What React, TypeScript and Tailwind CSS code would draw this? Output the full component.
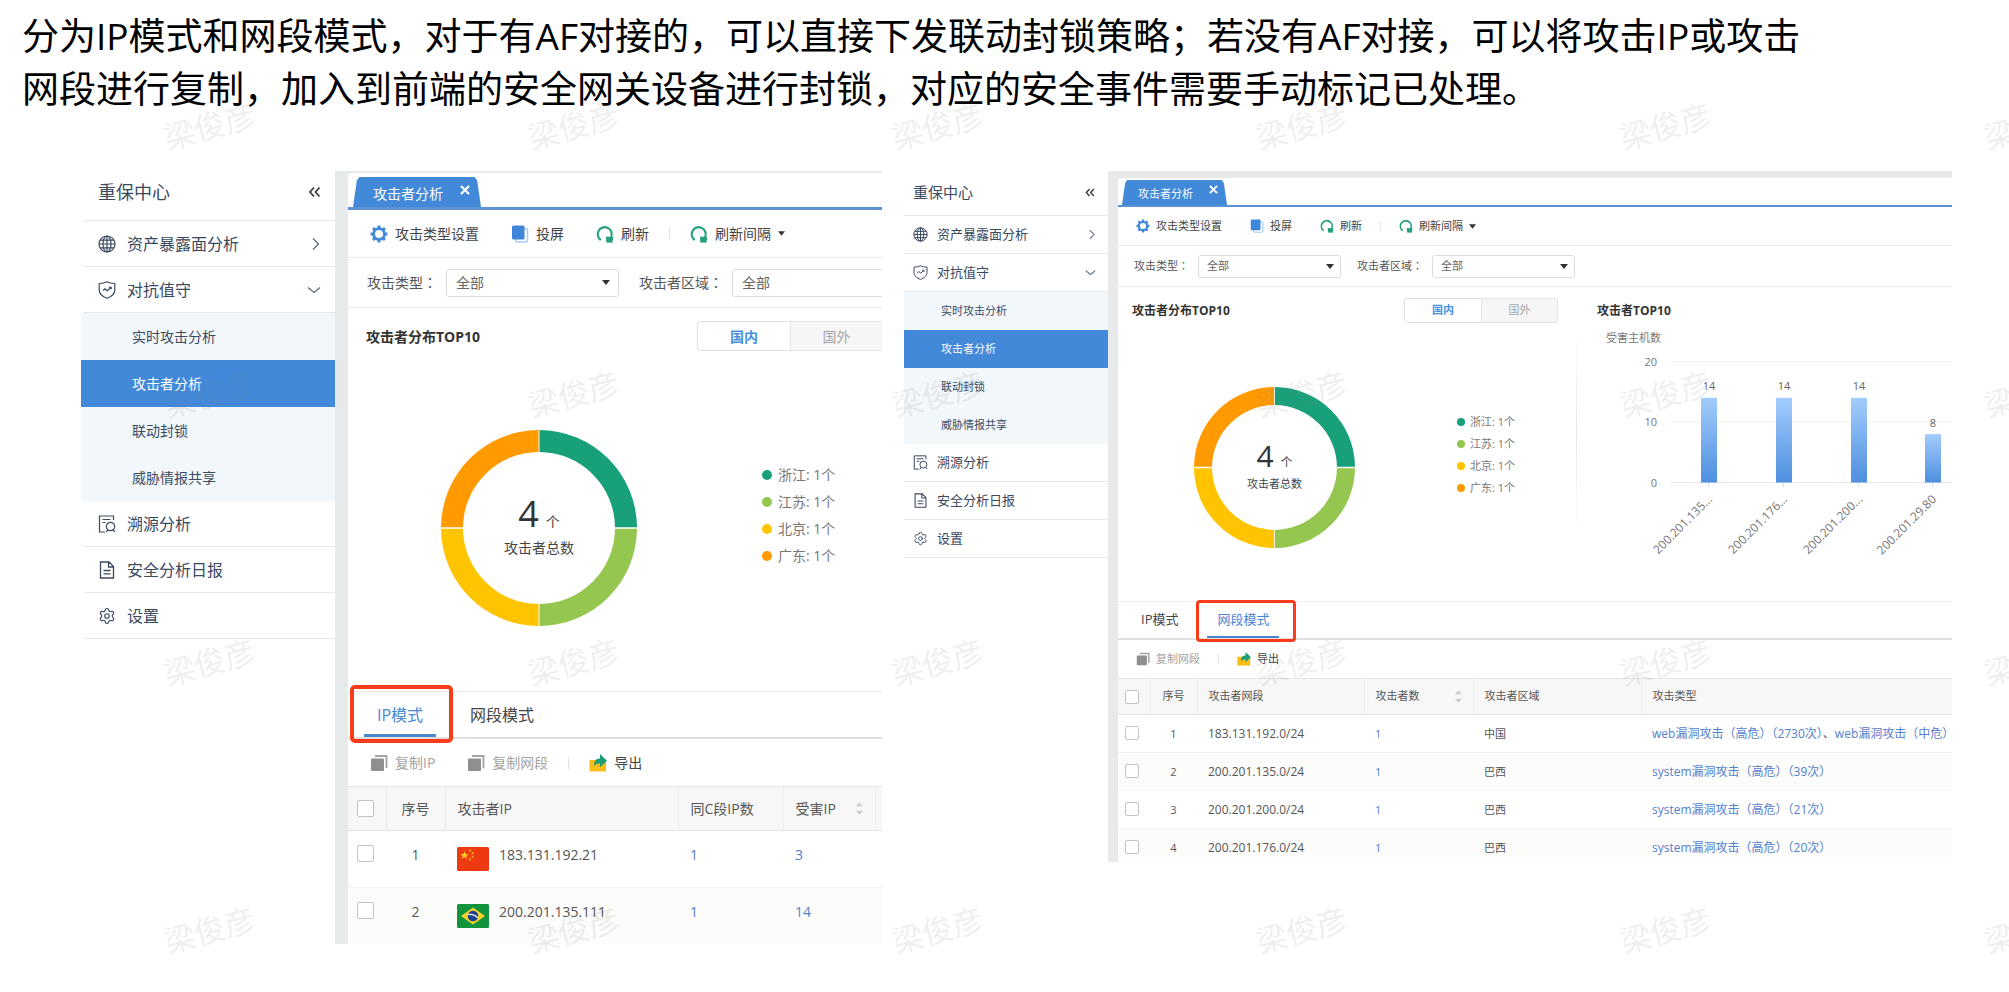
import type { ReactNode } from "react";
import { Settings } from "lucide-react";

/* ---------- size variants ---------- */

const large = {
  sideTitle: "flex h-[49px] items-center justify-between pl-[14px] pr-[14px] pb-[7px] text-[18px]",
  sideTitleLine: "ml-[3px] border-b border-[#e4e6e8]",
  side: "w-[254px] shrink-0",
  sideItem: "ml-[3px] flex h-[46px] items-center gap-[11px] border-b border-[#e6e8ea] pl-[14px] pr-[14px] text-[16px]",
  sideSub: "flex h-[47px] w-full items-center pl-[51px] text-[14px]",
  sideIcon: "size-[18px] shrink-0",
  chevron: "size-[14px]",
  frame: "min-w-0 flex-1 overflow-hidden bg-[#e7eaea] pl-[13px] pt-[2px]",
  tabBar: "flex h-[37px] items-end border-b-[3px] border-[#5b92d2] pl-[5px]",
  tab: "flex h-[30px] w-[128px] items-start pl-[20px] text-[14px] leading-[34px]",
  tabClose: "ml-auto mr-[11px] mt-[8px]",
  close: "size-[10px]",
  toolbar: "flex h-[47px] items-center pl-[6px]",
  tool: "flex items-center gap-[7px] px-4 text-[14px] whitespace-nowrap",
  toolIcon: "size-[18px] shrink-0",
  sep: "mx-1 h-[12px] w-px shrink-0 bg-[#e2e2e2]",
  filters: "flex h-[51px] items-center gap-5 border-y border-[#ebebeb] pl-[19px]",
  filter: "flex shrink-0 items-center gap-[9px] text-[14px]",
  select: "h-[28px] w-[173px] pl-[9px] text-[14px]",
  caret: "right-[9px]",
  head: "flex items-center justify-between pl-[18px] pt-[13px]",
  title: "text-[14px]",
  toggle: "h-[30px] rounded-l-[3px] border-y border-l",
  toggleBtn: "w-[92px] text-[14px]",
  donutRow: "flex items-start pb-[65px] pl-[93px] pt-[79px]",
  donut: "size-[196px]",
  donutBox: "relative shrink-0",
  big: "text-[36px] leading-[40px]",
  unit: "text-[14px]",
  total: "text-[14px] leading-[20px]",
  legend: "ml-[125px] mt-[31px] shrink-0 text-[14px] leading-[27px]",
  dot: "size-[10px]",
  legendItem: "flex items-center gap-[6px]",
  modes: "flex h-[48px] gap-[21px] border-t border-b-2 border-t-[#ececec] border-b-[#e0e0e0] pl-4",
  mode: "px-[13px] text-[16px]",
  ring: "-left-[14px] -right-[17px] -top-[7px] -bottom-[6px] border-4 rounded-[5px]",
  bar: "h-[3px]",
  th: "h-[44px] px-3 text-[14px]",
  td: "px-3 pt-[14px] text-[14px] leading-[20px]",
  row: "h-[57px] last:h-[56px]",
  checkCell: "pl-[9px]",
  check: "size-[17px]",
};

const small: typeof large = {
  sideTitle: "flex h-[44px] items-center justify-between pl-[9px] pr-[13px] pb-[2px] text-[15px]",
  sideTitleLine: "border-b border-[#e4e6e8]",
  side: "w-[204px] shrink-0",
  sideItem: "flex h-[38px] items-center gap-[9px] border-b border-[#e6e8ea] pl-[9px] pr-[12px] text-[13px]",
  sideSub: "flex h-[38px] w-full items-center pl-[37px] text-[11px]",
  sideIcon: "size-[15px] shrink-0",
  chevron: "size-[11px]",
  frame: "min-w-0 flex-1 overflow-hidden bg-[#e7e9eb] pl-[10px] pt-[7px]",
  tabBar: "flex h-[29px] items-end border-b-2 border-[#5b92d2] pl-[4px]",
  tab: "flex h-[25px] w-[105px] items-start pl-[16px] text-[11px] leading-[28px]",
  tabClose: "ml-auto mr-[9px] mt-[5px]",
  close: "size-[9px]",
  toolbar: "flex h-[38px] items-center pl-[4px]",
  tool: "flex items-center gap-[6px] px-[14px] text-[11px] whitespace-nowrap",
  toolIcon: "size-[14px] shrink-0",
  sep: "mx-1 h-[10px] w-px shrink-0 bg-[#e2e2e2]",
  filters: "flex h-[42px] items-center gap-4 border-y border-[#ebebeb] pl-[16px]",
  filter: "flex shrink-0 items-center gap-[9px] text-[11px]",
  select: "h-[23px] w-[143px] pl-[8px] text-[11px]",
  caret: "right-[7px]",
  head: "flex items-center justify-between pl-[14px] pr-[18px] pt-[11px]",
  title: "text-[12px]",
  toggle: "h-[25px] rounded-[3px] border",
  toggleBtn: "w-[76px] text-[11px]",
  donutRow: "flex items-start pb-[53px] pl-[76px] pt-[64px]",
  donut: "size-[161px]",
  donutBox: "relative shrink-0",
  big: "text-[30px] leading-[32px]",
  unit: "text-[12px]",
  total: "text-[11px] leading-[16px]",
  legend: "ml-[102px] mt-[24px] shrink-0 text-[11px] leading-[22px]",
  dot: "size-[8px]",
  legendItem: "flex items-center gap-[5px]",
  modes: "flex h-[39px] gap-[19px] border-t border-b-2 border-t-[#ececec] border-b-[#e0e0e0] pl-[13px]",
  mode: "px-[10px] text-[13px]",
  ring: "-left-[11px] -right-[17px] -top-[2px] -bottom-[4px] border-[3px] rounded-[4px]",
  bar: "h-[2px]",
  th: "h-[36px] px-[11px] text-[11px]",
  td: "px-[11px] pt-[10px] text-[11px] leading-[18px]",
  row: "h-[38px] last:h-[33px]",
  checkCell: "pl-[7px]",
  check: "size-[14px]",
};

type Size = typeof large;

/* ---------- icons ---------- */

type IconProps = { className?: string };

const GlobeIcon = ({ className }: IconProps) => (
  <svg viewBox="0 0 18 18" className={className} fill="none" stroke="currentColor" strokeWidth="1.2" aria-hidden="true">
    <circle cx="9" cy="9" r="8" />
    <ellipse cx="9" cy="9" rx="4" ry="8" />
    <path d="M9 1v16M1 9h16M2 5.2h14M2 12.8h14" />
  </svg>
);

const ShieldIcon = ({ className }: IconProps) => (
  <svg viewBox="0 0 18 18" className={className} fill="none" stroke="currentColor" strokeWidth="1.2" strokeLinejoin="round" aria-hidden="true">
    <path d="M9 .8 C7 2 4.200 2.500 1.200 2.500 V9 C1.200 13 4.500 15.700 9 17.300 C13.500 15.700 16.800 13 16.800 9 V2.500 C13.800 2.500 11 2 9 .8Z" />
    <path d="M5 9.600l2-1.800 2.300 2L13 6.400M11 6.300h2.200v2" />
  </svg>
);

const TraceIcon = ({ className }: IconProps) => (
  <svg viewBox="0 0 18 18" className={className} fill="none" stroke="currentColor" strokeWidth="1.2" aria-hidden="true">
    <path d="M15.500 5V1H1.500v16h5.500M4.500 4.500h8M4.500 7.500h3" />
    <circle cx="12.500" cy="11.500" r="4.200" />
    <path d="M9.800 14.800l-1.500 2.200M15.300 14.800l1.700 2.200" />
  </svg>
);

const ReportIcon = ({ className }: IconProps) => (
  <svg viewBox="0 0 18 18" className={className} fill="none" stroke="currentColor" strokeWidth="1.300" aria-hidden="true">
    <path d="M2.500 1h8.500l4.500 4.500V17h-13zM10.500 1v5h5M5.500 9.500h7M5.500 12.800h7" />
  </svg>
);

const ChevronIcon = ({ className, down }: IconProps & { down?: boolean }) => (
  <svg viewBox="0 0 14 14" className={className} fill="none" stroke="#5d6b7c" strokeWidth="1.300" aria-hidden="true">
    {down ? <path d="M1 4.500l6 5 6-5" /> : <path d="M6 1.500l5.500 5.500L6 12.500" />}
  </svg>
);

const CollapseIcon = ({ className }: IconProps) => (
  <svg viewBox="0 0 14 14" className={className} fill="none" stroke="#3d3d3d" strokeWidth="1.800" aria-hidden="true">
    <path d="M7 2.500L3 7l4 4.500M12.500 2.500L8.500 7l4 4.500" />
  </svg>
);

const CloseIcon = ({ className }: IconProps) => (
  <svg viewBox="0 0 10 10" className={className} stroke="#fff" strokeWidth="2.200" aria-hidden="true">
    <path d="M1 1l8 8M9 1L1 9" />
  </svg>
);

const GearIcon = ({ className }: IconProps) => (
  <svg viewBox="0 0 18 18" className={className} fill="none" stroke="#4289da" aria-hidden="true">
    <circle cx="9" cy="9" r="5.400" strokeWidth="2.800" />
    <path
      d="M9 .6v3M9 14.400v3M.6 9h3M14.400 9h3M3.060 3.060l2.100 2.100M12.840 12.840l2.100 2.100M3.060 14.940l2.100-2.100M12.840 5.160l2.100-2.100"
      strokeWidth="3"
    />
  </svg>
);

const CastIcon = ({ className }: IconProps) => (
  <svg viewBox="0 0 18 18" className={className} aria-hidden="true">
    <rect x="4.500" y="3.500" width="12" height="13.500" rx="2" fill="#fff" stroke="#a9cbf3" strokeWidth="1.500" />
    <rect x="1" y=".5" width="12.500" height="14" rx="1.500" fill="#3f86db" />
  </svg>
);

const RefreshIcon = ({ className }: IconProps) => (
  <svg viewBox="0 0 18 18" className={className} aria-hidden="true">
    <path d="M4.800 15A7 7 0 1 1 15.500 11L14 14.500" fill="none" stroke="#26a07f" strokeWidth="2.200" />
    <path d="M10 11.500l7.500 .8-1.200 5.500-6-.4z" fill="#26a07f" />
  </svg>
);

const CopyIcon = ({ className }: IconProps) => (
  <svg viewBox="0 0 18 18" className={className} aria-hidden="true">
    <path d="M5 2h11.500v12" fill="none" stroke="#a3a3a3" strokeWidth="1.800" />
    <rect x="1" y="4.500" width="13" height="12.500" rx="1" fill="#8f8f8f" />
  </svg>
);

const ExportIcon = ({ className }: IconProps) => (
  <svg viewBox="0 0 18 18" className={className} aria-hidden="true">
    <path d="M.5 6h16.500V17.500H.5z" fill="#fcbd16" />
    <path d="M5 12C5 7.500 6.500 4.500 11 4.500V0l7 6.800-7 6.400V9.600C8.500 9.600 6.500 10 5 12z" fill="#1e9e78" />
  </svg>
);

const CaretIcon = ({ className }: IconProps) => (
  <svg viewBox="0 0 8 5" className={className} aria-hidden="true">
    <path d="M0 0h8L4 5z" fill="#333" />
  </svg>
);

const SortIcon = () => (
  <svg viewBox="0 0 8 14" className="h-[13px] w-[7px]" fill="#cdcdcd" aria-hidden="true">
    <path d="M4 0l4 4.500H0zM4 14L0 9.500h8z" />
  </svg>
);

const ChinaFlag = () => (
  <svg viewBox="0 0 32 24" className="h-6 w-8 shrink-0" role="img" aria-label="中国">
    <rect width="32" height="24" rx="1.500" fill="#ee3a12" />
    <path d="M7.500 4l1.100 3h3.200L9.200 8.900l1 3.100-2.700-1.900L4.800 12l1-3.100L3.200 7h3.200z" fill="#ffd21f" />
    <g fill="#ffc61a">
      <circle cx="13" cy="3.500" r="1" />
      <circle cx="15.500" cy="6" r="1" />
      <circle cx="15.500" cy="9.500" r="1" />
      <circle cx="13" cy="12.500" r="1" />
    </g>
  </svg>
);

const BrazilFlag = () => (
  <svg viewBox="0 0 32 24" className="h-6 w-8 shrink-0" role="img" aria-label="巴西">
    <rect width="32" height="24" rx="1.500" fill="#12943c" />
    <path d="M16 3.500L28 12 16 20.500 4 12z" fill="#f6d32a" />
    <circle cx="16" cy="12" r="5.300" fill="#1d3f8f" />
    <path d="M11.200 10.500c3.600-.6 7 .6 9.600 3.400" fill="none" stroke="#fff" strokeWidth="1.300" />
  </svg>
);

/* ---------- sidebar ---------- */

const subItems = ["实时攻击分析", "攻击者分析", "联动封锁", "威胁情报共享"];

function Sidebar({ s }: { s: Size }) {
  return (
    <nav className={`${s.side} text-[#3a4a5f]`} aria-label="重保中心">
      <div className={s.sideTitleLine}>
        <div className={s.sideTitle}>
          <span>重保中心</span>
          <button type="button" aria-label="收起">
            <CollapseIcon className={s.chevron} />
          </button>
        </div>
      </div>
      <a href="#assets" className={s.sideItem}>
        <GlobeIcon className={s.sideIcon} />
        <span className="flex-1">资产暴露面分析</span>
        <ChevronIcon className={s.chevron} />
      </a>
      <a href="#guard" className={s.sideItem}>
        <ShieldIcon className={s.sideIcon} />
        <span className="flex-1">对抗值守</span>
        <ChevronIcon className={s.chevron} down />
      </a>
      <div className="bg-[#f2f7fb]">
        {subItems.map((label) => (
          <a
            key={label}
            href="#guard"
            className={`${s.sideSub} ${label === "攻击者分析" ? "bg-[#4289da] text-white" : ""}`}
          >
            {label}
          </a>
        ))}
      </div>
      <a href="#trace" className={s.sideItem}>
        <TraceIcon className={s.sideIcon} />
        溯源分析
      </a>
      <a href="#report" className={s.sideItem}>
        <ReportIcon className={s.sideIcon} />
        安全分析日报
      </a>
      <a href="#settings" className={s.sideItem}>
        <Settings className={s.sideIcon} strokeWidth={1.5} />
        设置
      </a>
    </nav>
  );
}

/* ---------- main area parts ---------- */

function Tool({ s, icon, children, muted }: { s: Size; icon: ReactNode; children: ReactNode; muted?: boolean }) {
  return (
    <button type="button" className={`${s.tool} ${muted ? "text-[#a3a3a3]" : "text-[#444]"}`}>
      {icon}
      {children}
    </button>
  );
}

function Filter({ s, id, label }: { s: Size; id: string; label: string }) {
  return (
    <div className={`${s.filter} text-[#555]`}>
      <label htmlFor={id} className="whitespace-nowrap">
        {label}
        <span className="font-['Noto_Sans_CJK_JP',sans-serif]">：</span>
      </label>
      <div className="relative flex items-center">
        <select id={id} className={`${s.select} appearance-none rounded-[3px] border border-[#dcdcdc] bg-white text-[#666]`}>
          <option>全部</option>
        </select>
        <CaretIcon className={`${s.caret} pointer-events-none absolute h-[5px] w-[8px]`} />
      </div>
    </div>
  );
}

function TopBars({ s, id }: { s: Size; id: string }) {
  return (
    <>
      <div className={s.tabBar}>
        <div
          className={`${s.tab} bg-[#4289da] text-white [clip-path:polygon(3%_12%,5%_0,95%_0,97%_12%,100%_100%,0_100%)]`}
        >
          <button type="button">攻击者分析</button>
          <button type="button" aria-label="关闭" className={s.tabClose}>
            <CloseIcon className={s.close} />
          </button>
        </div>
      </div>
      <div className={s.toolbar}>
        <Tool s={s} icon={<GearIcon className={s.toolIcon} />}>攻击类型设置</Tool>
        <Tool s={s} icon={<CastIcon className={s.toolIcon} />}>投屏</Tool>
        <Tool s={s} icon={<RefreshIcon className={s.toolIcon} />}>刷新</Tool>
        <span className={s.sep} />
        <Tool s={s} icon={<RefreshIcon className={s.toolIcon} />}>
          刷新间隔
          <CaretIcon className="h-[5px] w-[7px]" />
        </Tool>
      </div>
      <div className={s.filters}>
        <Filter s={s} id={`${id}-type`} label="攻击类型" />
        <Filter s={s} id={`${id}-area`} label="攻击者区域" />
      </div>
    </>
  );
}

const regions = [
  { name: "浙江", bg: "bg-[#17a07a]", arc: "M100.500 2A98 98 0 0 1 198 99.200H176A76 76 0 0 0 100.500 24Z", fill: "#17a07a" },
  { name: "江苏", bg: "bg-[#95c750]", arc: "M198 100.800A98 98 0 0 1 100.500 198V176A76 76 0 0 0 176 100.800Z", fill: "#95c750" },
  { name: "北京", bg: "bg-[#ffc400]", arc: "M99.500 198A98 98 0 0 1 2 100.800H24A76 76 0 0 0 99.500 176Z", fill: "#ffc400" },
  { name: "广东", bg: "bg-[#ff9a00]", arc: "M2 99.200A98 98 0 0 1 99.500 2V24A76 76 0 0 0 24 99.200Z", fill: "#ff9a00" },
];

function Distribution({ s }: { s: Size }) {
  return (
    <section className="min-w-0">
      <div className={s.head}>
        <h2 className={`${s.title} font-bold text-[#333]`}>攻击者分布TOP10</h2>
        <div className={`${s.toggle} flex overflow-hidden border-[#e2e2e2]`}>
          <button type="button" className={`${s.toggleBtn} font-bold text-[#4a90e2]`}>国内</button>
          <button type="button" className={`${s.toggleBtn} border-l border-[#e8e8e8] bg-[#f6f6f6] text-[#a6a6a6]`}>
            国外
          </button>
        </div>
      </div>
      <div className={s.donutRow}>
        <div className={s.donutBox}>
          <svg viewBox="2 2 196 196" className={s.donut} aria-hidden="true">
            {regions.map((r) => (
              <path key={r.name} d={r.arc} fill={r.fill} />
            ))}
          </svg>
          <div className="absolute inset-0 flex flex-col items-center justify-center gap-1 pb-1 text-[#444]">
            <div className="flex items-baseline gap-[7px]">
              <span className={`${s.big} text-[#333]`}>4</span>
              <span className={s.unit}>个</span>
            </div>
            <div className={s.total}>攻击者总数</div>
          </div>
        </div>
        <ul className={`${s.legend} text-[#777]`}>
          {regions.map((r) => (
            <li key={r.name} className={s.legendItem}>
              <span className={`${s.dot} ${r.bg} rounded-full`} />
              {r.name}: 1个
            </li>
          ))}
        </ul>
      </div>
    </section>
  );
}

const bars = [
  { label: "200.201.135...", value: 14, x: 124 },
  { label: "200.201.176...", value: 14, x: 199 },
  { label: "200.201.200...", value: 14, x: 274 },
  { label: "200.201.29.80", value: 8, x: 348 },
];

function BarChart() {
  return (
    <svg width="375" height="260" viewBox="0 0 375 260" fontSize="11" fill="#777" role="img" aria-label="受害主机数">
      <defs>
        <linearGradient id="bar-fill" x1="0" y1="0" x2="0" y2="1">
          <stop offset="0" stopColor="#a3ccfd" />
          <stop offset="1" stopColor="#4e8fdf" />
        </linearGradient>
      </defs>
      <text x="29" y="19">受害主机数</text>
      {[20, 10, 0].map((tick) => (
        <g key={tick}>
          <path d={`M94 ${159.5 - tick * 6.05}H375`} stroke={tick ? "#f0f0f0" : "#e4e7ea"} />
          <text x="80" y={163.5 - tick * 6.05} textAnchor="end">{tick}</text>
        </g>
      ))}
      {bars.map((b) => (
        <g key={b.label}>
          <rect x={b.x} y={159.5 - b.value * 6.05} width="16" height={b.value * 6.05} fill="url(#bar-fill)" />
          <path d={`M${b.x + 7.5} 160v4`} stroke="#cfe0f5" />
          <text x={b.x + 8} y={152 - b.value * 6.05} textAnchor="middle" fill="#666">{b.value}</text>
          <text transform={`translate(${b.x + 12} 177) rotate(-45)`} textAnchor="end" fontSize="12">{b.label}</text>
        </g>
      ))}
    </svg>
  );
}

function Modes({ s, labels, active }: { s: Size; labels: string[]; active: string }) {
  return (
    <div className={s.modes} role="tablist">
      {labels.map((label) => {
        const on = label === active;
        return (
          <button
            key={label}
            type="button"
            role="tab"
            aria-selected={on}
            className={`${s.mode} relative ${on ? "text-[#4a86d6]" : "text-[#444]"}`}
          >
            {label}
            {on && <span className={`${s.bar} absolute inset-x-0 bottom-0 bg-[#4a86d0]`} />}
            {on && <span className={`${s.ring} absolute border-[#fa3c1b]`} />}
          </button>
        );
      })}
    </div>
  );
}

function Check({ s, label }: { s: Size; label: string }) {
  return (
    <input
      type="checkbox"
      aria-label={label}
      className={`${s.check} block appearance-none rounded-[2px] border border-[#c4c4c4] bg-white`}
    />
  );
}

const headRow = "border-y border-[#e3e3e3] bg-[#f7f7f7] text-left text-[#555]";
const headCell = "border-r border-[#eeeeee] font-normal";
const bodyRow = "border-b border-[#f3f3f3] align-top text-[#555] even:bg-[#fcfcfb] last:border-b-0";
const link = "text-[#5580cc]";

const attackers = [
  { ip: "183.131.192.21", flag: <ChinaFlag />, peers: 1, victims: 3 },
  { ip: "200.201.135.111", flag: <BrazilFlag />, peers: 1, victims: 14 },
];

function IpTable({ s }: { s: Size }) {
  return (
    <table className="w-full table-fixed border-collapse">
      <colgroup>
        <col className="w-[38px]" />
        <col className="w-[59px]" />
        <col className="w-[233px]" />
        <col className="w-[105px]" />
        <col className="w-[92px]" />
        <col />
      </colgroup>
      <thead>
        <tr className={headRow}>
          <th className={`${headCell} ${s.checkCell}`}><Check s={s} label="全选" /></th>
          <th className={`${s.th} ${headCell} text-center`}>序号</th>
          <th className={`${s.th} ${headCell}`}>攻击者IP</th>
          <th className={`${s.th} ${headCell}`}>同C段IP数</th>
          <th className={`${s.th} ${headCell}`}>
            <div className="flex items-center justify-between">
              受害IP
              <SortIcon />
            </div>
          </th>
          <th />
        </tr>
      </thead>
      <tbody>
        {attackers.map((a, i) => (
          <tr key={a.ip} className={`${bodyRow} ${s.row}`}>
            <td className={`${s.checkCell} pt-[14px]`}><Check s={s} label={a.ip} /></td>
            <td className={`${s.td} text-center`}>{i + 1}</td>
            <td className={s.td}>
              <div className="flex items-start gap-[10px]">
                <span className="pt-[2px]">{a.flag}</span>
                {a.ip}
              </div>
            </td>
            <td className={s.td}><a href="#peers" className={link}>{a.peers}</a></td>
            <td className={s.td}><a href="#victims" className={link}>{a.victims}</a></td>
            <td />
          </tr>
        ))}
      </tbody>
    </table>
  );
}

const segments = [
  { net: "183.131.192.0/24", area: "中国", types: ["web漏洞攻击（高危）（2730次）", "web漏洞攻击（中危）"] },
  { net: "200.201.135.0/24", area: "巴西", types: ["system漏洞攻击（高危）（39次）"] },
  { net: "200.201.200.0/24", area: "巴西", types: ["system漏洞攻击（高危）（21次）"] },
  { net: "200.201.176.0/24", area: "巴西", types: ["system漏洞攻击（高危）（20次）"] },
];

function SegmentTable({ s }: { s: Size }) {
  return (
    <table className="w-full table-fixed border-collapse">
      <colgroup>
        <col className="w-[32px]" />
        <col className="w-[47px]" />
        <col className="w-[167px]" />
        <col className="w-[109px]" />
        <col className="w-[168px]" />
        <col />
      </colgroup>
      <thead>
        <tr className={headRow}>
          <th className={`${headCell} ${s.checkCell}`}><Check s={s} label="全选" /></th>
          <th className={`${s.th} ${headCell} text-center`}>序号</th>
          <th className={`${s.th} ${headCell}`}>攻击者网段</th>
          <th className={`${s.th} ${headCell}`}>
            <div className="flex items-center justify-between">
              攻击者数
              <SortIcon />
            </div>
          </th>
          <th className={`${s.th} ${headCell}`}>攻击者区域</th>
          <th className={`${s.th} font-normal`}>攻击类型</th>
        </tr>
      </thead>
      <tbody>
        {segments.map((seg, i) => (
          <tr key={seg.net} className={`${bodyRow} ${s.row}`}>
            <td className={`${s.checkCell} pt-[11px]`}><Check s={s} label={seg.net} /></td>
            <td className={`${s.td} text-center`}>{i + 1}</td>
            <td className={s.td}><span className="text-[12px]">{seg.net}</span></td>
            <td className={s.td}><a href="#attackers" className={link}>1</a></td>
            <td className={s.td}>{seg.area}</td>
            <td className={s.td}>
              <span className="text-[12px] whitespace-nowrap">
                {seg.types.map((t, k) => (
                  <span key={t}>
                    {k > 0 && "、"}
                    <a href="#type" className={link}>{t}</a>
                  </span>
                ))}
              </span>
            </td>
          </tr>
        ))}
      </tbody>
    </table>
  );
}

/* ---------- the two consoles ---------- */

function IpConsole() {
  const s = large;
  return (
    <div className="flex min-w-0">
      <Sidebar s={s} />
      <main className={s.frame}>
        <div className="rounded-tl-[4px] bg-white">
          <TopBars s={s} id="ip" />
          <Distribution s={s} />
          <Modes s={s} labels={["IP模式", "网段模式"]} active="IP模式" />
          <div className={s.toolbar}>
            <Tool s={s} muted icon={<CopyIcon className={s.toolIcon} />}>复制IP</Tool>
            <Tool s={s} muted icon={<CopyIcon className={s.toolIcon} />}>复制网段</Tool>
            <span className={s.sep} />
            <Tool s={s} icon={<ExportIcon className={s.toolIcon} />}>导出</Tool>
          </div>
          <IpTable s={s} />
        </div>
      </main>
    </div>
  );
}

function SegmentConsole() {
  const s = small;
  return (
    <div className="flex min-w-0">
      <Sidebar s={s} />
      <section className={s.frame}>
        <div className="rounded-tl-[4px] bg-white">
          <TopBars s={s} id="segment" />
          <div className="grid grid-cols-[458fr_1px_375fr]">
            <Distribution s={s} />
            <div className="mt-[43px] h-[205px] bg-linear-to-b from-transparent via-[#e6e6e6] to-transparent" />
            <section className="min-w-0 overflow-hidden">
              <div className="flex h-[36px] items-center pl-5 pt-[11px]">
                <h2 className={`${s.title} font-bold text-[#333]`}>攻击者TOP10</h2>
              </div>
              <BarChart />
            </section>
          </div>
          <Modes s={s} labels={["IP模式", "网段模式"]} active="网段模式" />
          <div className={s.toolbar}>
            <Tool s={s} muted icon={<CopyIcon className={s.toolIcon} />}>复制网段</Tool>
            <span className={s.sep} />
            <Tool s={s} icon={<ExportIcon className={s.toolIcon} />}>导出</Tool>
          </div>
          <SegmentTable s={s} />
        </div>
      </section>
    </div>
  );
}

function Watermarks() {
  return (
    <div className="pointer-events-none absolute inset-0 overflow-hidden" aria-hidden="true">
      <div className="-mt-[8px] ml-[27px] grid grid-cols-[repeat(6,364px)] auto-rows-[268px]">
        {Array.from({ length: 24 }, (_, i) => (
          <div key={i} className="flex items-center justify-center">
            <span className="-rotate-[15deg] text-[31px] text-[#808080]/15">梁俊彦</span>
          </div>
        ))}
      </div>
    </div>
  );
}

export default function App() {
  return (
    <div className="relative min-h-screen overflow-hidden bg-white font-['Open_Sans','Noto_Sans_CJK_SC',sans-serif]">
      <p className="pl-[22px] pt-[9px] text-[37px] leading-[53px] text-black">
        分为IP模式和网段模式，对于有AF对接的，可以直接下发联动封锁策略；若没有AF对接，可以将攻击IP或攻击
        <br />
        网段进行复制，加入到前端的安全网关设备进行封锁，对应的安全事件需要手动标记已处理。
      </p>
      <div className="mt-[56px] grid grid-cols-[801fr_1048fr] items-start gap-[22px] pl-[81px] pr-[57px]">
        <IpConsole />
        <SegmentConsole />
      </div>
      <Watermarks />
    </div>
  );
}
